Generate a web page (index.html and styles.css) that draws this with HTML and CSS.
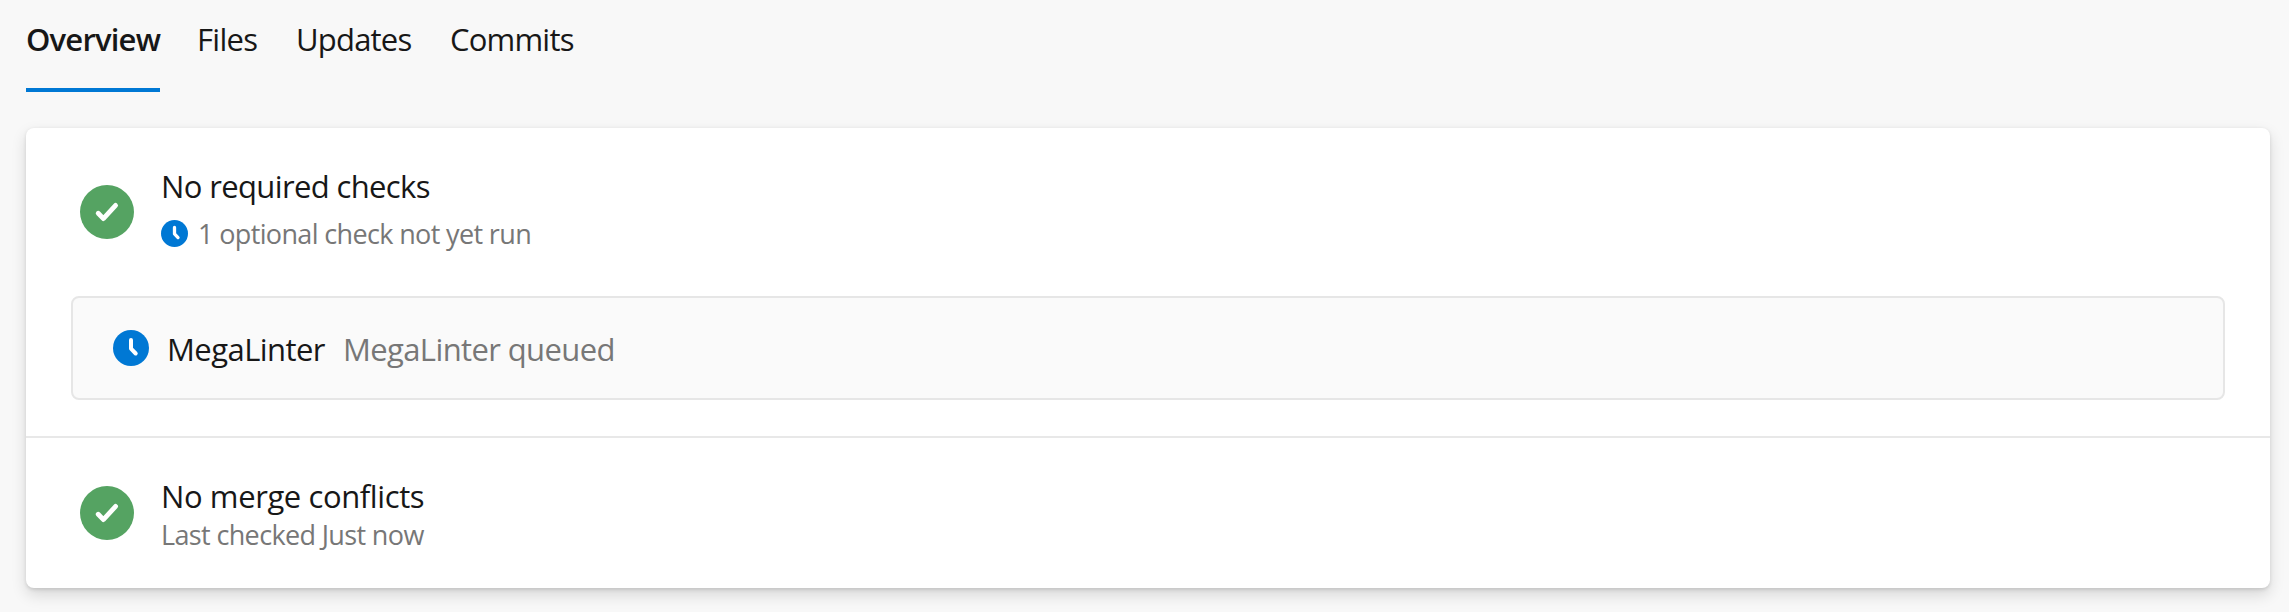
FILE: index.html
```html
<!DOCTYPE html>
<html lang="en">
<head>
<meta charset="utf-8">
<title>Overview</title>
<link rel="stylesheet" href="styles.css">
</head>
<body>
<nav class="tabs">
  <a class="tab tab-active">Overview</a>
  <a class="tab tab-files">Files</a>
  <a class="tab tab-updates">Updates</a>
  <a class="tab tab-commits">Commits</a>
</nav>
<main class="card">
  <section class="checks">
    <div class="status">
      <svg class="badge" viewBox="0 0 54 54"><circle cx="27" cy="27" r="27" fill="#55a362"/><path d="M18.2 28.3l5.2 5.3L35.6 20.4" fill="none" stroke="#fff" stroke-width="4.8" stroke-linecap="round" stroke-linejoin="round"/></svg>
      <div class="text">
        <div class="title"><span class="t-required">No required checks</span></div>
        <div class="sub optional">
          <svg class="clock-small" viewBox="0 0 36 36"><circle cx="18" cy="18" r="18" fill="#0078d4"/><path d="M18 10v8.6l4.7 4.9" fill="none" stroke="#fff" stroke-width="4.4" stroke-linecap="round" stroke-linejoin="round"/></svg>
          <span class="t-optional">1 optional check not yet run</span>
        </div>
      </div>
    </div>
    <div class="run">
      <svg class="clock" viewBox="0 0 36 36"><circle cx="18" cy="18" r="18" fill="#0078d4"/><path d="M18 10v8.6l4.7 4.9" fill="none" stroke="#fff" stroke-width="4" stroke-linecap="round" stroke-linejoin="round"/></svg>
      <span class="run-name">MegaLinter</span>
      <span class="run-state">MegaLinter queued</span>
    </div>
  </section>
  <section class="conflicts">
    <div class="status">
      <svg class="badge" viewBox="0 0 54 54"><circle cx="27" cy="27" r="27" fill="#55a362"/><path d="M18.2 28.3l5.2 5.3L35.6 20.4" fill="none" stroke="#fff" stroke-width="4.8" stroke-linecap="round" stroke-linejoin="round"/></svg>
      <div class="text">
        <div class="title"><span class="t-merge">No merge conflicts</span></div>
        <div class="sub"><span class="t-last">Last checked Just now</span></div>
      </div>
    </div>
  </section>
</main>
</body>
</html>
```
FILE: styles.css
```css
* { box-sizing: border-box; }
body {
  margin: 0;
  height: 612px;
  overflow: hidden;
  background: #f8f8f8;
  color: #171717;
  font-family: "Open Sans", "Noto Sans", sans-serif;
  font-size: 31px;
  line-height: 40px;
  white-space: nowrap;
}
svg { display: block; flex: none; }
.tabs { display: flex; height: 128px; padding: 19px 0 0 26px; }
.tab { height: 73px; flex: none; }
.tab-active { width: 134px; margin-right: 37px; border-bottom: 4px solid #0078d4; font-weight: 600; letter-spacing: -0.8px; }
.tab-files { width: 99px; letter-spacing: -0.7px; }
.tab-updates { width: 154px; letter-spacing: -0.8px; }
.tab-commits { letter-spacing: -0.8px; }
.card {
  width: 2244px;
  height: 460px;
  margin-left: 26px;
  background: #fff;
  border-radius: 8px;
  box-shadow: 0 6.4px 14.4px rgba(0, 0, 0, .132), 0 1.2px 3.6px rgba(0, 0, 0, .108);
}
.checks { height: 310px; padding: 38px 45px 0; border-bottom: 2px solid #e8e8e8; }
.status { display: flex; gap: 27px; padding-left: 9px; }
.conflicts { padding: 38px 45px 0; }
.badge { width: 54px; height: 54px; margin-top: 19px; }
.conflicts .badge { margin-top: 10px; }
.title { height: 40px; letter-spacing: -0.63px; }
.t-merge { letter-spacing: -0.4px; }
.sub { display: flex; height: 37px; font-size: 27px; line-height: 38px; color: #777; letter-spacing: -0.64px; }
.optional { margin-top: 9px; gap: 10px; }
.clock-small { width: 27px; height: 27px; margin-top: 5px; }
.run {
  display: flex;
  height: 104px;
  margin-top: 44px;
  padding: 31px 0 0 40px;
  background: #fafafa;
  border: 2px solid #e6e6e6;
  border-radius: 8px;
}
.clock { width: 36px; height: 36px; margin: 1px 18px 0 0; }
.run-name { width: 176px; letter-spacing: -0.55px; }
.run-state { color: #777; letter-spacing: -0.62px; }
```
